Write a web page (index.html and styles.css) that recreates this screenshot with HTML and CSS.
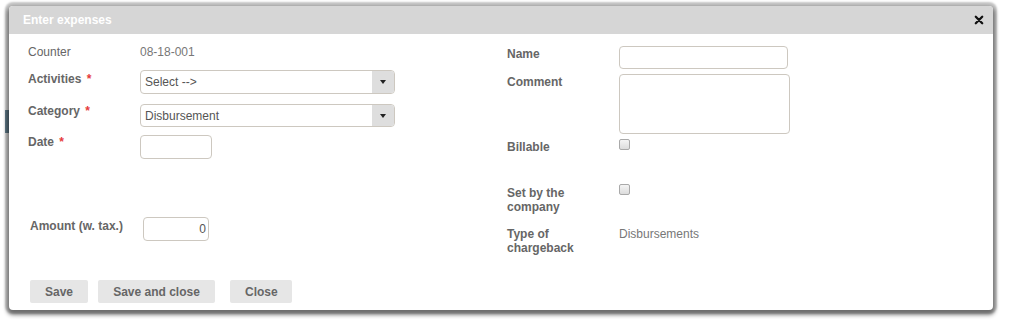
FILE: index.html
```html
<!DOCTYPE html>
<html lang="en">
<head>
    <meta charset="UTF-8">
    <title>Enter expenses</title>
    <link rel="stylesheet" href="styles.css">
</head>
<body>

<div class="backdrop-mark"></div>

<div class="dialog">
    <div class="dialog-header">
        <span class="dialog-title">Enter expenses</span>
        <button class="dialog-close" title="Close">
            <svg width="10" height="10" viewBox="0 0 10 10"><path d="M1.8 1.8 L8.2 8.2 M8.2 1.8 L1.8 8.2" stroke="#111" stroke-width="2.3" stroke-linecap="round"/></svg>
        </button>
    </div>

    <div class="dialog-body">
        <div class="form-col left-col">
            <div class="form-row row-counter">
                <span class="form-label light">Counter</span>
                <span class="form-value">08-18-001</span>
            </div>
            <div class="form-row row-activities">
                <span class="form-label">Activities <em class="req">*</em></span>
                <div class="combo">
                    <span class="combo-text">Select --&gt;</span>
                    <span class="combo-arrow"></span>
                </div>
            </div>
            <div class="form-row row-category">
                <span class="form-label">Category <em class="req">*</em></span>
                <div class="combo">
                    <span class="combo-text">Disbursement</span>
                    <span class="combo-arrow"></span>
                </div>
            </div>
            <div class="form-row row-date">
                <span class="form-label">Date <em class="req">*</em></span>
                <input type="text" class="text-input date-input">
            </div>
            <div class="form-row row-amount">
                <span class="form-label">Amount (w. tax.)</span>
                <input type="text" class="text-input amount-input" value="0">
            </div>
        </div>

        <div class="form-col right-col">
            <div class="form-row row-name">
                <span class="form-label">Name</span>
                <input type="text" class="text-input name-input">
            </div>
            <div class="form-row row-comment">
                <span class="form-label">Comment</span>
                <textarea class="text-input comment-input"></textarea>
            </div>
            <div class="form-row row-billable">
                <span class="form-label">Billable</span>
                <span class="check-box"></span>
            </div>
            <div class="form-row row-company">
                <span class="form-label">Set by the<br>company</span>
                <span class="check-box"></span>
            </div>
            <div class="form-row row-chargeback">
                <span class="form-label">Type of<br>chargeback</span>
                <span class="form-value">Disbursements</span>
            </div>
        </div>
    </div>

    <div class="dialog-buttons">
        <button class="dialog-button btn-save">Save</button>
        <button class="dialog-button btn-save-close">Save and close</button>
        <button class="dialog-button btn-close">Close</button>
    </div>
</div>

</body>
</html>
```

FILE: styles.css
```css
body {
    font-family: "Liberation Sans", Arial, sans-serif;
    font-size: 12px;
    margin: 0;
    padding: 6px 0 0 9px;
    min-height: 100vh;
    box-sizing: border-box;
    background: #fff;
    color: #555;
}

/* bit of the page behind the dialog */
.backdrop-mark {
    position: absolute;
    left: 5px;
    top: 110px;
    width: 4px;
    height: 23px;
    background: #6f8d9e;
}

.dialog {
    position: relative;
    width: 984px;
    height: 304px;
    background: #fff;
    border-radius: 4px;
    box-shadow: 0 0 2px 4px rgba(0, 0, 0, 0.22), 0 3px 4px 2px rgba(0, 0, 0, 0.45);
    display: flex;
    flex-direction: column;
}

.dialog-header {
    height: 28px;
    background: #d6d6d6;
    border-radius: 4px 4px 0 0;
    display: flex;
    align-items: center;
    justify-content: space-between;
    padding: 0 9px 0 14px;
}

.dialog-title {
    color: #fff;
    font-weight: bold;
    font-size: 12px;
}

.dialog-close {
    border: none;
    background: none;
    padding: 0;
    display: flex;
    cursor: pointer;
}

.dialog-body {
    display: flex;
    padding: 0 0 0 19px;
    height: 246px;
}

.form-col {
    display: flex;
    flex-direction: column;
}

.left-col {
    width: 479px;
}

.form-row {
    display: flex;
    align-items: flex-start;
}

.form-label {
    width: 112px;
    flex-shrink: 0;
    font-weight: bold;
    color: #666;
    line-height: 14px;
}

.form-label.light {
    font-weight: normal;
    color: #666;
}

.req {
    font-style: normal;
    color: #e63b3b;
    margin-left: 2px;
}

.form-value {
    color: #777;
    line-height: 14px;
}

/* left column rows */
.row-counter {
    margin-top: 11px;
}

.row-activities {
    margin-top: 11px;
}

.row-activities .form-label {
    padding-top: 2px;
}

.row-category {
    margin-top: 10px;
}

.row-date {
    margin-top: 8px;
}

.row-amount {
    margin-top: 58px;
    margin-left: 2px;
}

.row-amount .form-label {
    width: 113px;
    padding-top: 2px;
}

.combo {
    width: 255px;
    height: 24px;
    box-sizing: border-box;
    border: 1px solid #cdc8c0;
    border-radius: 4px;
    display: flex;
    align-items: center;
    overflow: hidden;
}

.row-category .combo {
    height: 23px;
}

.combo-text {
    flex: 1;
    padding-left: 4px;
    color: #555;
}

.combo-arrow {
    width: 22px;
    height: 100%;
    background: #dedede;
    display: flex;
    align-items: center;
    justify-content: center;
}

.combo-arrow::after {
    content: "";
    border-left: 3.5px solid transparent;
    border-right: 3.5px solid transparent;
    border-top: 4px solid #222;
}

.text-input {
    box-sizing: border-box;
    border: 1px solid #cdc8c0;
    border-radius: 4px;
    font-family: "Liberation Sans", Arial, sans-serif;
    font-size: 12px;
    color: #555;
    padding: 0 4px;
    margin: 0;
    background: #fff;
}

.date-input {
    width: 72px;
    height: 24px;
}

.amount-input {
    width: 66px;
    height: 24px;
    text-align: right;
    padding-right: 2px;
}

/* right column rows */
.row-name {
    margin-top: 12px;
}

.row-name .form-label,
.row-comment .form-label {
    padding-top: 1px;
}

.name-input {
    width: 169px;
    height: 23px;
}

.row-comment {
    margin-top: 5px;
}

.comment-input {
    width: 171px;
    height: 60px;
    resize: none;
    display: block;
}

.row-billable {
    margin-top: 5px;
}

.row-billable .form-label {
    padding-top: 1px;
}

.row-company {
    margin-top: 30px;
}

.row-company .form-label {
    padding-top: 2px;
}

.row-chargeback {
    margin-top: 13px;
}

.check-box {
    width: 11px;
    height: 11px;
    box-sizing: border-box;
    border: 1px solid #a9a9a9;
    border-radius: 2px;
    background: linear-gradient(#f4f4f4, #dcdcdc);
}

.dialog-buttons {
    display: flex;
    padding: 0 0 0 21px;
}

.dialog-button {
    height: 23px;
    border: none;
    border-radius: 2px;
    background: #e6e6e6;
    color: #666;
    font-family: "Liberation Sans", Arial, sans-serif;
    font-size: 12px;
    font-weight: bold;
    padding: 0 15px;
    cursor: pointer;
}

.btn-save {
    width: 58px;
    margin-right: 10px;
}

.btn-save-close {
    width: 117px;
    margin-right: 15px;
}

.btn-close {
    width: 62px;
}

.dialog-button:hover {
    background: #dadada;
}
```
